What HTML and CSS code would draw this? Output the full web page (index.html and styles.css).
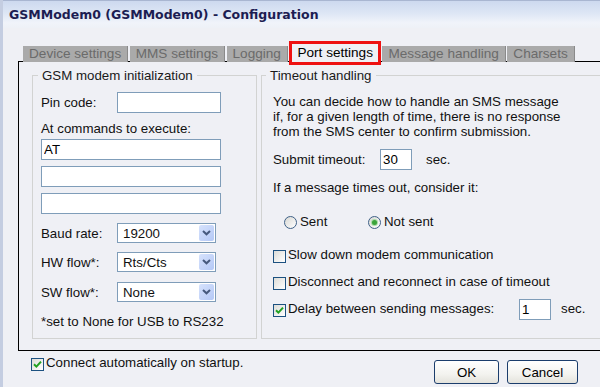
FILE: index.html
```html
<!DOCTYPE html>
<html lang="en">

<head>
  <meta charset="UTF-8">
  <title>GSMModem0 - Configuration</title>
  <link rel="stylesheet" href="styles.css">
</head>

<body>
  <div class="window">
    <div class="titlebar">GSMModem0 (GSMModem0) - Configuration</div>

    <div class="tabs">
      <div class="tab">Device settings</div>
      <div class="tab">MMS settings</div>
      <div class="tab">Logging</div>
      <div class="tab tab-active">Port settings</div>
      <div class="tab">Message handling</div>
      <div class="tab">Charsets</div>
    </div>

    <div class="panel">
      <fieldset class="group group-modem">
        <legend>GSM modem initialization</legend>
        <div class="field-row row-pin">
          <span class="field-label">Pin code:</span>
          <input class="text-input input-pin" type="text">
        </div>
        <div class="caption caption-at">At commands to execute:</div>
        <input class="text-input input-wide input-first" type="text" value="AT">
        <input class="text-input input-wide" type="text">
        <input class="text-input input-wide" type="text">

        <div class="field-row row-select row-baud">
          <span class="field-label">Baud rate:</span>
          <div class="select"><span class="select-value">19200</span><span class="select-btn"><svg width="9" height="6" viewBox="0 0 9 6"><path d="M1 1 L4.5 4.3 L8 1" stroke="#46597d" stroke-width="2" fill="none"/></svg></span></div>
        </div>
        <div class="field-row row-select">
          <span class="field-label">HW flow*:</span>
          <div class="select"><span class="select-value">Rts/Cts</span><span class="select-btn"><svg width="9" height="6" viewBox="0 0 9 6"><path d="M1 1 L4.5 4.3 L8 1" stroke="#46597d" stroke-width="2" fill="none"/></svg></span></div>
        </div>
        <div class="field-row row-select row-sw">
          <span class="field-label">SW flow*:</span>
          <div class="select"><span class="select-value">None</span><span class="select-btn"><svg width="9" height="6" viewBox="0 0 9 6"><path d="M1 1 L4.5 4.3 L8 1" stroke="#46597d" stroke-width="2" fill="none"/></svg></span></div>
        </div>
        <div class="note">*set to None for USB to RS232</div>
      </fieldset>

      <fieldset class="group group-timeout">
        <legend>Timeout handling</legend>
        <p class="intro">You can decide how to handle an SMS message<br>if, for a given length of time, there is no response<br>from the SMS center to confirm submission.</p>
        <div class="field-row row-submit">
          <span class="field-label label-submit">Submit timeout:</span>
          <input class="text-input input-small" type="text" value="30">
          <span class="unit">sec.</span>
        </div>
        <div class="caption caption-consider">If a message times out, consider it:</div>
        <div class="radios">
          <div class="option"><span class="radio"></span>Sent</div>
          <div class="option"><span class="radio radio-on"></span>Not sent</div>
        </div>
        <div class="option check-row check-first"><span class="checkbox"></span>Slow down modem communication</div>
        <div class="option check-row"><span class="checkbox"></span>Disconnect and reconnect in case of timeout</div>
        <div class="option check-row">
          <span class="checkbox"><svg width="11" height="11" viewBox="0 0 11 11"><path d="M2 5.2 L4.4 7.6 L9 2.6" stroke="#21a121" stroke-width="2" fill="none"/></svg></span>
          <span class="delay-label">Delay between sending messages:</span>
          <input class="text-input input-small input-delay" type="text" value="1">
          <span class="unit unit-delay">sec.</span>
        </div>
      </fieldset>
    </div>

    <div class="footer">
      <div class="option check-connect"><span class="checkbox"><svg width="11" height="11" viewBox="0 0 11 11"><path d="M2 5.2 L4.4 7.6 L9 2.6" stroke="#21a121" stroke-width="2" fill="none"/></svg></span>Connect automatically on startup.</div>
      <div class="buttons">
        <button class="button button-ok">OK</button>
        <button class="button button-cancel">Cancel</button>
      </div>
    </div>
  </div>
</body>

</html>
```

FILE: styles.css
```css
html,
body {
  margin: 0;
  padding: 0;
}

body {
  font-family: "Liberation Sans", Arial, sans-serif;
  font-size: 13.3px;
  color: #111;
  background: #eff0f5;
}

.window {
  width: 600px;
  height: 387px;
  overflow: hidden;
  box-sizing: border-box;
  border-left: 3px solid #c4cde1;
  background: #eff0f5;
}

/* title bar */
.titlebar {
  height: 27px;
  line-height: 27px;
  border-top: 1px solid #a9b6d1;
  padding-left: 6px;
  font-family: "DejaVu Sans", Verdana, sans-serif;
  font-weight: bold;
  font-size: 12.5px;
  color: #1c1d52;
  white-space: nowrap;
  background: linear-gradient(#cdd9ef, #dde6f5 45%, #f0f3fa 80%, #eef1f7);
}

/* tabs */
.tabs {
  display: flex;
  align-items: flex-end;
  height: 21px;
  margin: 13px 0 -1px 20px;
  position: relative;
  z-index: 1;
}

.tab {
  height: 16px;
  line-height: 16px;
  padding: 0 6px;
  font-size: 13.6px;
  background: #aaaaaa;
  color: #6b6b6b;
  border-right: 1px solid #8a8a8a;
  margin-right: 1.5px;
  white-space: nowrap;
}

.tab-active {
  height: 18px;
  line-height: 18px;
  padding: 0 5px;
  background: #eff0f5;
  color: #000;
  border: 3px solid #ee1111;
  margin-bottom: -3px;
}

/* panel */
.panel {
  display: flex;
  align-items: flex-start;
  gap: 4px;
  height: 290px;
  box-sizing: border-box;
  margin: 0 -20px 0 15px;
  padding: 6px 0 0 13px;
  border: 1px solid #000;
  border-right: 0;
}

.group {
  margin: 0;
  min-width: 0;
  box-sizing: border-box;
  height: 271px;
  border: 1px solid #d2d3d2;
  padding: 0 8px;
}

.group legend {
  padding: 0 4px;
  margin-left: -3px;
  line-height: 15px;
  color: #1a1a1a;
}

.group-modem {
  width: 225px;
}

.group-timeout {
  flex: 1;
  padding-left: 11px;
}

.group-timeout legend {
  margin-left: -7px;
}

.field-row {
  display: flex;
  align-items: center;
  height: 21px;
}

.field-label {
  width: 76px;
  flex: none;
}

.caption,
.note {
  line-height: 15px;
}

.row-pin {
  margin-top: 9px;
}

.caption-at {
  margin-top: 8px;
}

.text-input {
  display: block;
  box-sizing: border-box;
  height: 21px;
  margin: 0;
  padding: 0 2px;
  border: 1px solid #7f9db9;
  background: #fff;
  font-family: inherit;
  font-size: 13.3px;
  color: #000;
  outline: none;
}

.input-pin {
  width: 104px;
}

.input-wide {
  width: 180px;
  margin-top: 6px;
}

.input-first {
  margin-top: 3px;
}

.row-select {
  height: 20px;
  margin-top: 9px;
}

.row-sw {
  margin-top: 10px;
}

.select {
  display: flex;
  align-items: center;
  box-sizing: border-box;
  width: 99px;
  height: 20px;
  border: 1px solid #7f9db9;
  background: #fff;
}

.select-value {
  flex: 1;
  padding-left: 5px;
}

.select-btn {
  display: flex;
  align-items: center;
  justify-content: center;
  width: 15px;
  height: 16px;
  margin-right: 1px;
  border-radius: 2px;
  background: linear-gradient(135deg, #d6e2fc, #b4c8f6);
}

.note {
  margin-top: 12px;
}

/* timeout side */
.intro {
  margin: 11px 0 0;
  line-height: 15px;
}

.row-submit {
  margin-top: 10px;
}

.label-submit {
  width: 107px;
}

.input-small {
  width: 32px;
}

.unit {
  margin-left: 14px;
}

.unit-delay {
  margin-left: 10px;
}

.caption-consider {
  margin-top: 10px;
}

.radios {
  display: grid;
  grid-template-columns: 84px auto;
  margin-top: 19px;
  padding-left: 11px;
}

.option {
  display: flex;
  align-items: flex-start;
  line-height: 15px;
  white-space: nowrap;
}

.radio {
  width: 13px;
  height: 13px;
  box-sizing: border-box;
  margin: 2px 3px 0 0;
  border: 1px solid #3f6187;
  border-radius: 50%;
  background: linear-gradient(135deg, #d8d8d4, #fff);
  display: flex;
  align-items: center;
  justify-content: center;
}

.radio-on::after {
  content: "";
  width: 5px;
  height: 5px;
  border-radius: 50%;
  background: #3aa43a;
  box-shadow: 0 0 0 1px #a8dca8;
}

.checkbox {
  flex: none;
  width: 13px;
  height: 13px;
  box-sizing: border-box;
  margin: 3px 2px 0 0;
  border: 1px solid #1c5180;
  background: linear-gradient(135deg, #dcdcd7, #fff);
  display: flex;
  align-items: center;
  justify-content: center;
}

.check-row {
  margin-top: 11px;
}

.check-first {
  margin-top: 18px;
}

.delay-label {
  width: 231px;
}

.input-delay {
  margin-top: -2px;
}

/* footer */
.footer {
  display: flex;
  justify-content: space-between;
  align-items: flex-start;
  padding: 0 22px 0 28px;
}

.check-connect {
  margin-top: 4px;
}

.buttons {
  display: flex;
  gap: 8px;
  margin-top: 9px;
}

.button {
  height: 24px;
  padding: 0;
  border: 1px solid #1b3d6c;
  border-radius: 3px;
  background: linear-gradient(#ffffff, #f3f3ef 60%, #e4e3dc);
  font-family: inherit;
  font-size: 13.3px;
  color: #000;
}

.button-ok {
  width: 65px;
}

.button-cancel {
  width: 71px;
}
```
